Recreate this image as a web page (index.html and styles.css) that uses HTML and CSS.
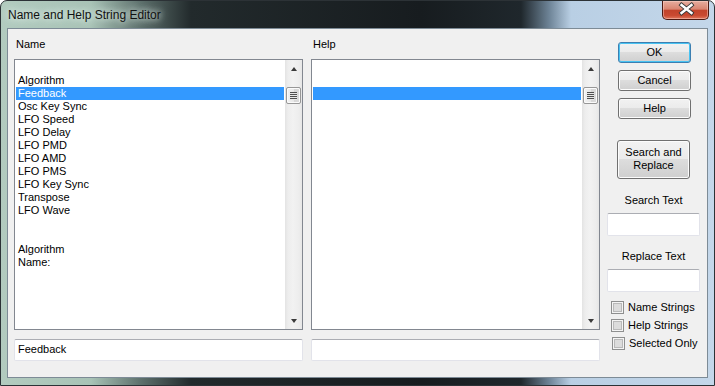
FILE: index.html
```html
<!DOCTYPE html>
<html>
<head>
<meta charset="utf-8">
<link rel="stylesheet" href="styles.css">
</head>
<body>
<div class="window">
  <div class="titlebar">
    <span class="title">Name and Help String Editor</span>
    <div class="close">
      <svg width="47" height="19" viewBox="0 0 47 19">
        <path d="M18.5 5 L28.5 13 M28.5 5 L18.5 13" stroke="#3a3a3a" stroke-width="4.2" stroke-linecap="square"/>
        <path d="M18.5 5 L28.5 13 M28.5 5 L18.5 13" stroke="#ffffff" stroke-width="2.4" stroke-linecap="square"/>
      </svg>
    </div>
  </div>
  <div class="client">
    <div class="col">
      <div class="label">Name</div>
      <div class="list">
        <div class="items">
          <div class="item"></div>
          <div class="item">Algorithm</div>
          <div class="item sel">Feedback</div>
          <div class="item">Osc Key Sync</div>
          <div class="item">LFO Speed</div>
          <div class="item">LFO Delay</div>
          <div class="item">LFO PMD</div>
          <div class="item">LFO AMD</div>
          <div class="item">LFO PMS</div>
          <div class="item">LFO Key Sync</div>
          <div class="item">Transpose</div>
          <div class="item">LFO Wave</div>
          <div class="item"></div>
          <div class="item"></div>
          <div class="item">Algorithm</div>
          <div class="item">Name:</div>
        </div>
        <div class="scrollbar">
          <div class="sbtn"><span class="tri up"></span></div>
          <div class="track"><div class="thumb"><i></i><i></i><i></i><i></i></div></div>
          <div class="sbtn"><span class="tri down"></span></div>
        </div>
      </div>
      <div class="edit">Feedback</div>
    </div>
    <div class="col">
      <div class="label">Help</div>
      <div class="list">
        <div class="items">
          <div class="item"></div>
          <div class="item"></div>
          <div class="item sel"></div>
        </div>
        <div class="scrollbar">
          <div class="sbtn"><span class="tri up"></span></div>
          <div class="track"><div class="thumb"><i></i><i></i><i></i><i></i></div></div>
          <div class="sbtn"><span class="tri down"></span></div>
        </div>
      </div>
      <div class="edit"></div>
    </div>
    <div class="side">
      <div class="btn default">OK</div>
      <div class="btn">Cancel</div>
      <div class="btn">Help</div>
      <div class="btn tall">Search and<br>Replace</div>
      <div class="slabel">Search Text</div>
      <div class="sbox"></div>
      <div class="slabel">Replace Text</div>
      <div class="sbox"></div>
      <div class="checks">
        <div class="check"><span class="cb"></span>Name Strings</div>
        <div class="check"><span class="cb"></span>Help Strings</div>
        <div class="check shift"><span class="cb"></span>Selected Only</div>
      </div>
    </div>
  </div>
</div>
</body>
</html>
```
FILE: styles.css
```css
* { box-sizing: border-box; }
html, body { margin: 0; padding: 0; background: #ffffff; }
body { width: 715px; height: 386px; overflow: hidden; font-family: "Liberation Sans", Arial, sans-serif; font-size: 11px; color: #000; }

.window {
  width: 715px; height: 386px;
  display: flex; flex-direction: column;
  border-radius: 7px 7px 0 0;
  border: 1px solid #2c3236;
  background:
    linear-gradient(90deg, #b2cbbf 0px, #a8c3b6 90px, #5d706c 140px, #222a2c 190px, #171c1f 420px, #1f272c 520px, #6d8396 548px, #b9cfe4 570px, #c4d7ea 715px);
  overflow: hidden;
}

.titlebar { height: 27px; display: flex; align-items: flex-start; flex: none; }
.title {
  margin: 7px 0 0 7px;
  font-family: "Liberation Sans", Arial, sans-serif;
  font-size: 12px; line-height: 15px; color: #111;
  text-shadow: 0 0 6px #e3f0ea, 0 0 10px #d8eae2;
}
.close {
  margin-left: auto; margin-right: 5px;
  width: 47px; height: 19px;
  border: 1px solid #4d1a12; border-top: none;
  border-radius: 0 0 5px 5px;
  background: linear-gradient(180deg, #e6ad9f 0%, #d98571 45%, #c2432b 52%, #c94a31 80%, #e0775c 100%);
  box-shadow: inset 0 0 0 1px rgba(255,220,210,0.45);
}
.close svg { display: block; margin-top: -1px; }

.client {
  flex: none;
  width: 701px;
  height: 350px;
  margin: 0 6px 0 6px;
  border: 1px solid #7d8b96;
  background: #f0f0f0;
  display: flex;
  padding: 9px 0 0 6px;
}

.col { width: 289px; flex: none; display: flex; flex-direction: column; }
.col + .col { margin-left: 8px; }
.label { height: 13px; line-height: 13px; padding-left: 2px; margin-bottom: 8px; }

.list {
  height: 271px; flex: none;
  border: 1px solid #828790;
  background: #fff;
  display: flex;
}
.items { flex: 1; padding: 1px 1px 0 1px; }
.item { height: 13px; line-height: 13px; padding-left: 2px; white-space: nowrap; }
.item.sel { background: #3399ff; color: #fff; }

.scrollbar {
  width: 17px; flex: none; display: flex; flex-direction: column;
  background: linear-gradient(90deg, #e3e3e3 0px, #ededed 3px, #f2f2f2 8px, #ededed 14px, #e6e6e6 17px);
}
.sbtn { height: 17px; display: flex; align-items: center; justify-content: center; flex: none; }
.tri { width: 0; height: 0; border-left: 3.5px solid transparent; border-right: 3.5px solid transparent; }
.tri.up { border-bottom: 4px solid #3a3a3a; margin-top: 1px; }
.tri.down { border-top: 4px solid #3a3a3a; margin-top: 1px; }
.track { flex: 1; padding-top: 10px; }
.thumb {
  width: 15px; height: 17px; margin-left: 1px;
  border: 1px solid #979797; border-radius: 2px;
  background: linear-gradient(90deg, #f3f3f3 0%, #e8e8e8 50%, #d6d6d6 51%, #dcdcdc 100%);
  box-shadow: inset 0 0 0 1px #fbfbfb;
  display: flex; flex-direction: column; align-items: center; justify-content: center; gap: 1px;
}
.thumb i { display: block; width: 7px; height: 1px; background: #4f4f4f; box-shadow: 0 1px 0 #e6e6e6; }

.edit {
  margin-top: 9px; height: 22px; flex: none;
  background: #fff;
  border: 1px solid #e2e3ea; border-top-color: #abadb3;
  border-radius: 2px;
  line-height: 19px; padding-left: 3px;
}

.side { width: 107px; flex: none; display: flex; flex-direction: column; padding-top: 4px; }
.btn {
  width: 73px; height: 21px; margin-left: 18px; margin-bottom: 7px; flex: none;
  border: 1px solid #707070; border-radius: 3px;
  background: linear-gradient(180deg, #f2f2f2 0%, #ebebeb 48%, #dddddd 50%, #cfcfcf 100%);
  box-shadow: inset 0 0 0 1px #fcfcfc;
  text-align: center; line-height: 19px;
}
.btn.default {
  border-color: #3c7fb1;
  box-shadow: inset 0 0 0 1px #48c3f2;
}
.btn.tall { height: 39px; margin-top: 14px; margin-left: 17px; line-height: 13px; padding-top: 5px; margin-bottom: 0; }

.slabel { height: 13px; line-height: 13px; text-align: center; margin-top: 15px; margin-left: 7px; width: 93px; }
.slabel + .sbox { margin-top: 6px; }
.sbox {
  width: 93px; height: 23px; margin-left: 7px; flex: none;
  background: #fff;
  border: 1px solid #e2e3ea; border-top-color: #abadb3;
  border-radius: 2px;
}
.sbox + .slabel { margin-top: 14px; }

.checks { margin-top: 9px; display: flex; flex-direction: column; gap: 5px; padding-left: 11px; }
.check { height: 13px; line-height: 13px; display: flex; align-items: center; gap: 4px; white-space: nowrap; }
.check.shift { padding-left: 1px; }
.cb {
  width: 13px; height: 13px; flex: none;
  border: 1px solid #8e8f8f;
  background: #f4f4f4;
  box-shadow: inset 0 0 0 1px #f4f4f4, inset 0 0 0 2px #b9b9b9, inset 0 0 0 6px #dcdcdc;
}
```
